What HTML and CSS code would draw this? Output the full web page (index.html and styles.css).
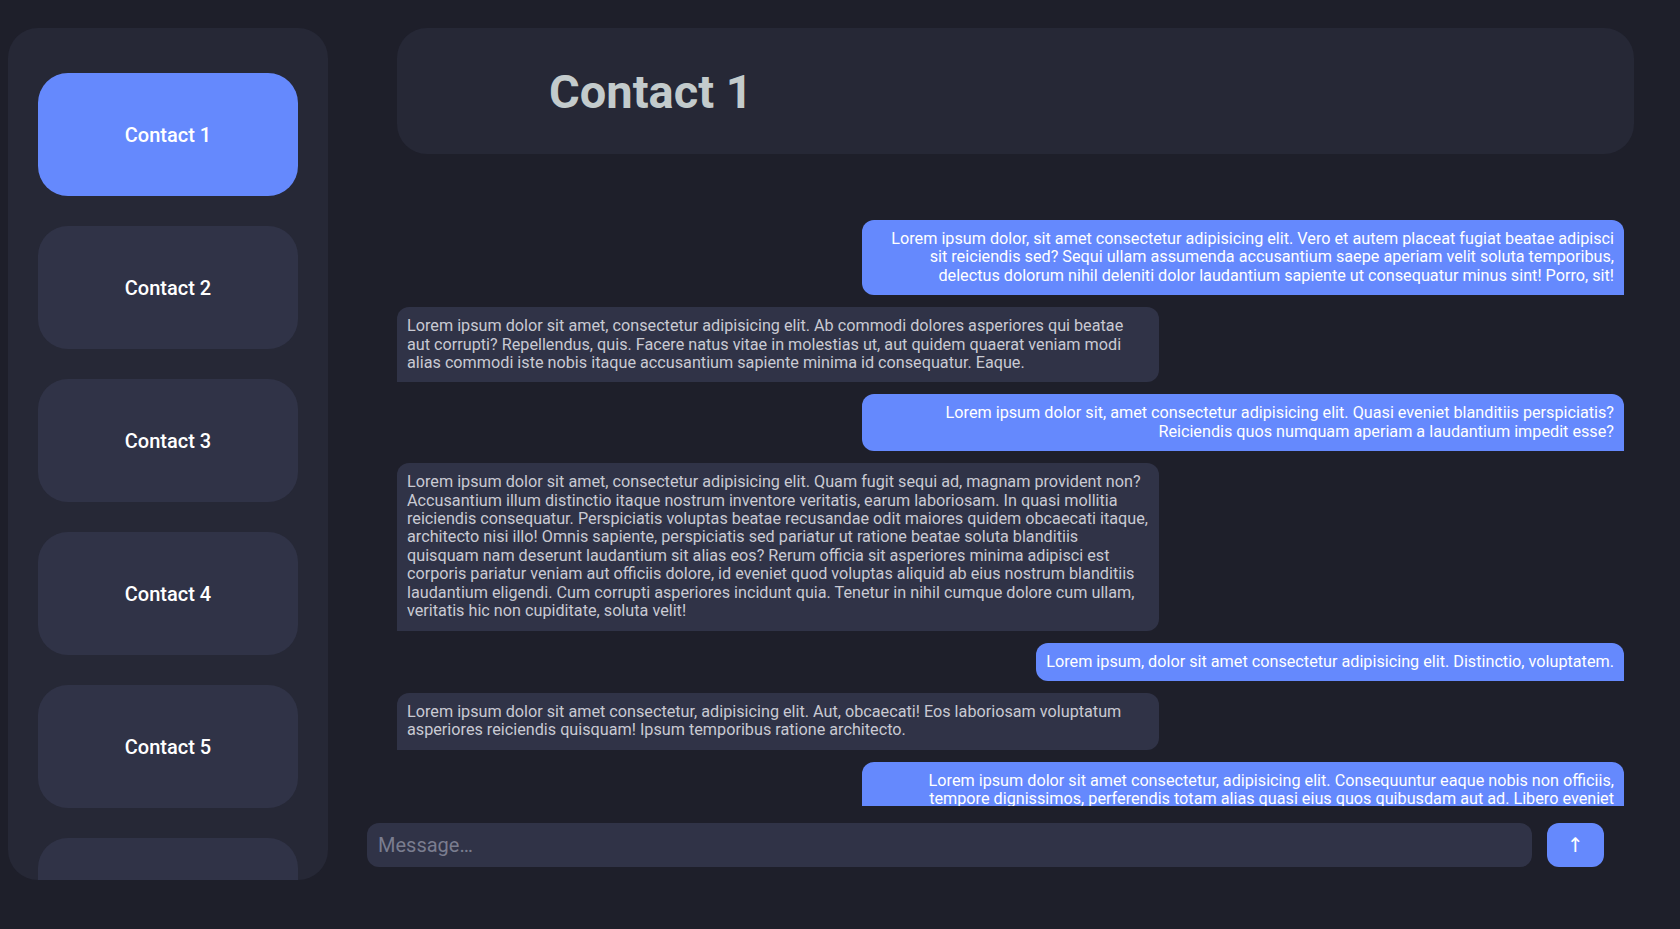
FILE: index.html
```html
<!DOCTYPE html>
<html lang="en">
<head>
<meta charset="utf-8">
<title>Chat</title>
<link rel="stylesheet" href="styles.css">
</head>
<body>
<div class="app">
  <aside class="sidebar">
    <div class="contact active">Contact 1</div>
    <div class="contact">Contact 2</div>
    <div class="contact">Contact 3</div>
    <div class="contact">Contact 4</div>
    <div class="contact">Contact 5</div>
    <div class="contact">Contact 6</div>
    <div class="contact">Contact 7</div>
  </aside>
  <main class="main">
    <header class="chat-header">
      <h1 class="chat-title">Contact 1</h1>
    </header>
    <section class="messages">
      <div class="msg sent">Lorem ipsum dolor, sit amet consectetur adipisicing elit. Vero et autem placeat fugiat beatae adipisci sit reiciendis sed? Sequi ullam assumenda accusantium saepe aperiam velit soluta temporibus, delectus dolorum nihil deleniti dolor laudantium sapiente ut consequatur minus sint! Porro, sit!</div>
      <div class="msg received">Lorem ipsum dolor sit amet, consectetur adipisicing elit. Ab commodi dolores asperiores qui beatae aut corrupti? Repellendus, quis. Facere natus vitae in molestias ut, aut quidem quaerat veniam modi alias commodi iste nobis itaque accusantium sapiente minima id consequatur. Eaque.</div>
      <div class="msg sent">Lorem ipsum dolor sit, amet consectetur adipisicing elit. Quasi eveniet blanditiis perspiciatis? Reiciendis quos numquam aperiam a laudantium impedit esse?</div>
      <div class="msg received">Lorem ipsum dolor sit amet, consectetur adipisicing elit. Quam fugit sequi ad, magnam provident non? Accusantium illum distinctio itaque nostrum inventore veritatis, earum laboriosam. In quasi mollitia reiciendis consequatur. Perspiciatis voluptas beatae recusandae odit maiores quidem obcaecati itaque, architecto nisi illo! Omnis sapiente, perspiciatis sed pariatur ut ratione beatae soluta blanditiis quisquam nam deserunt laudantium sit alias eos? Rerum officia sit asperiores minima adipisci est corporis pariatur veniam aut officiis dolore, id eveniet quod voluptas aliquid ab eius nostrum blanditiis laudantium eligendi. Cum corrupti asperiores incidunt quia. Tenetur in nihil cumque dolore cum ullam, veritatis hic non cupiditate, soluta velit!</div>
      <div class="msg sent">Lorem ipsum, dolor sit amet consectetur adipisicing elit. Distinctio, voluptatem.</div>
      <div class="msg received">Lorem ipsum dolor sit amet consectetur, adipisicing elit. Aut, obcaecati! Eos laboriosam voluptatum asperiores reiciendis quisquam! Ipsum temporibus ratione architecto.</div>
      <div class="msg sent">Lorem ipsum dolor sit amet consectetur, adipisicing elit. Consequuntur eaque nobis non officiis, tempore dignissimos, perferendis totam alias quasi eius quos quibusdam aut ad. Libero eveniet voluptate dolorum, quae nesciunt sequi.</div>
    </section>
    <form class="composer">
      <input class="composer-input" type="text" placeholder="Message…">
      <button class="send-btn" type="button">↑</button>
    </form>
  </main>
</div>
</body>
</html>
```

FILE: styles.css
```css
* {
  box-sizing: border-box;
}

html, body {
  margin: 0;
  height: 100%;
}

body {
  background: #1e1f2a;
  font-family: Roboto, "Noto Sans", sans-serif;
  overflow: hidden;
}

.app {
  display: flex;
  height: 929px;
  padding: 28px 0 0 8px;
}

.sidebar {
  width: 320px;
  height: 852px;
  flex-shrink: 0;
  background: #262836;
  border-radius: 30px;
  padding: 45px 30px;
  display: flex;
  flex-direction: column;
  gap: 30px;
  overflow: hidden;
}

.contact {
  flex-shrink: 0;
  height: 123px;
  border-radius: 30px;
  background: #303347;
  color: #ffffff;
  font-size: 20px;
  font-weight: 500;
  display: flex;
  align-items: center;
  justify-content: center;
}

.contact.active {
  background: #6589fd;
}

.main {
  flex: 1;
  margin-left: 39px;
  margin-right: 46px;
  display: flex;
  flex-direction: column;
}

.chat-header {
  margin-left: 30px;
  height: 126px;
  flex-shrink: 0;
  background: #262836;
  border-radius: 30px;
  display: flex;
  align-items: center;
  padding-left: 152px;
}

.chat-title {
  margin: 0;
  color: #c3cbcc;
  font-size: 47px;
  font-weight: 700;
}

.messages {
  margin: 66px 10px 0 30px;
  height: 586px;
  flex-shrink: 0;
  overflow: hidden;
  display: flex;
  flex-direction: column;
  gap: 12px;
}

.msg {
  flex-shrink: 0;
  max-width: 762px;
  padding: 10px;
  font-size: 16.22px;
  line-height: 18.4px;
  border-radius: 12px;
}

.msg.sent {
  align-self: flex-end;
  background: #6589fd;
  color: #ffffff;
  text-align: right;
  border-bottom-right-radius: 0;
}

.msg.received {
  align-self: flex-start;
  background: #303347;
  color: #c9cad3;
  border-bottom-left-radius: 0;
}

.composer {
  margin: 17px 30px 0 0;
  display: flex;
  gap: 15px;
}

.composer-input {
  flex: 1;
  height: 44px;
  border: none;
  outline: none;
  border-radius: 12px;
  background: #303347;
  color: #ffffff;
  font-family: inherit;
  font-size: 20px;
  padding: 0 11px;
}

.composer-input::placeholder {
  color: #7a7d8f;
}

.send-btn {
  width: 57px;
  height: 44px;
  border: none;
  border-radius: 12px;
  background: #6589fd;
  color: #ffffff;
  font-family: "DejaVu Sans", sans-serif;
  font-size: 20px;
  padding: 0;
}
```
